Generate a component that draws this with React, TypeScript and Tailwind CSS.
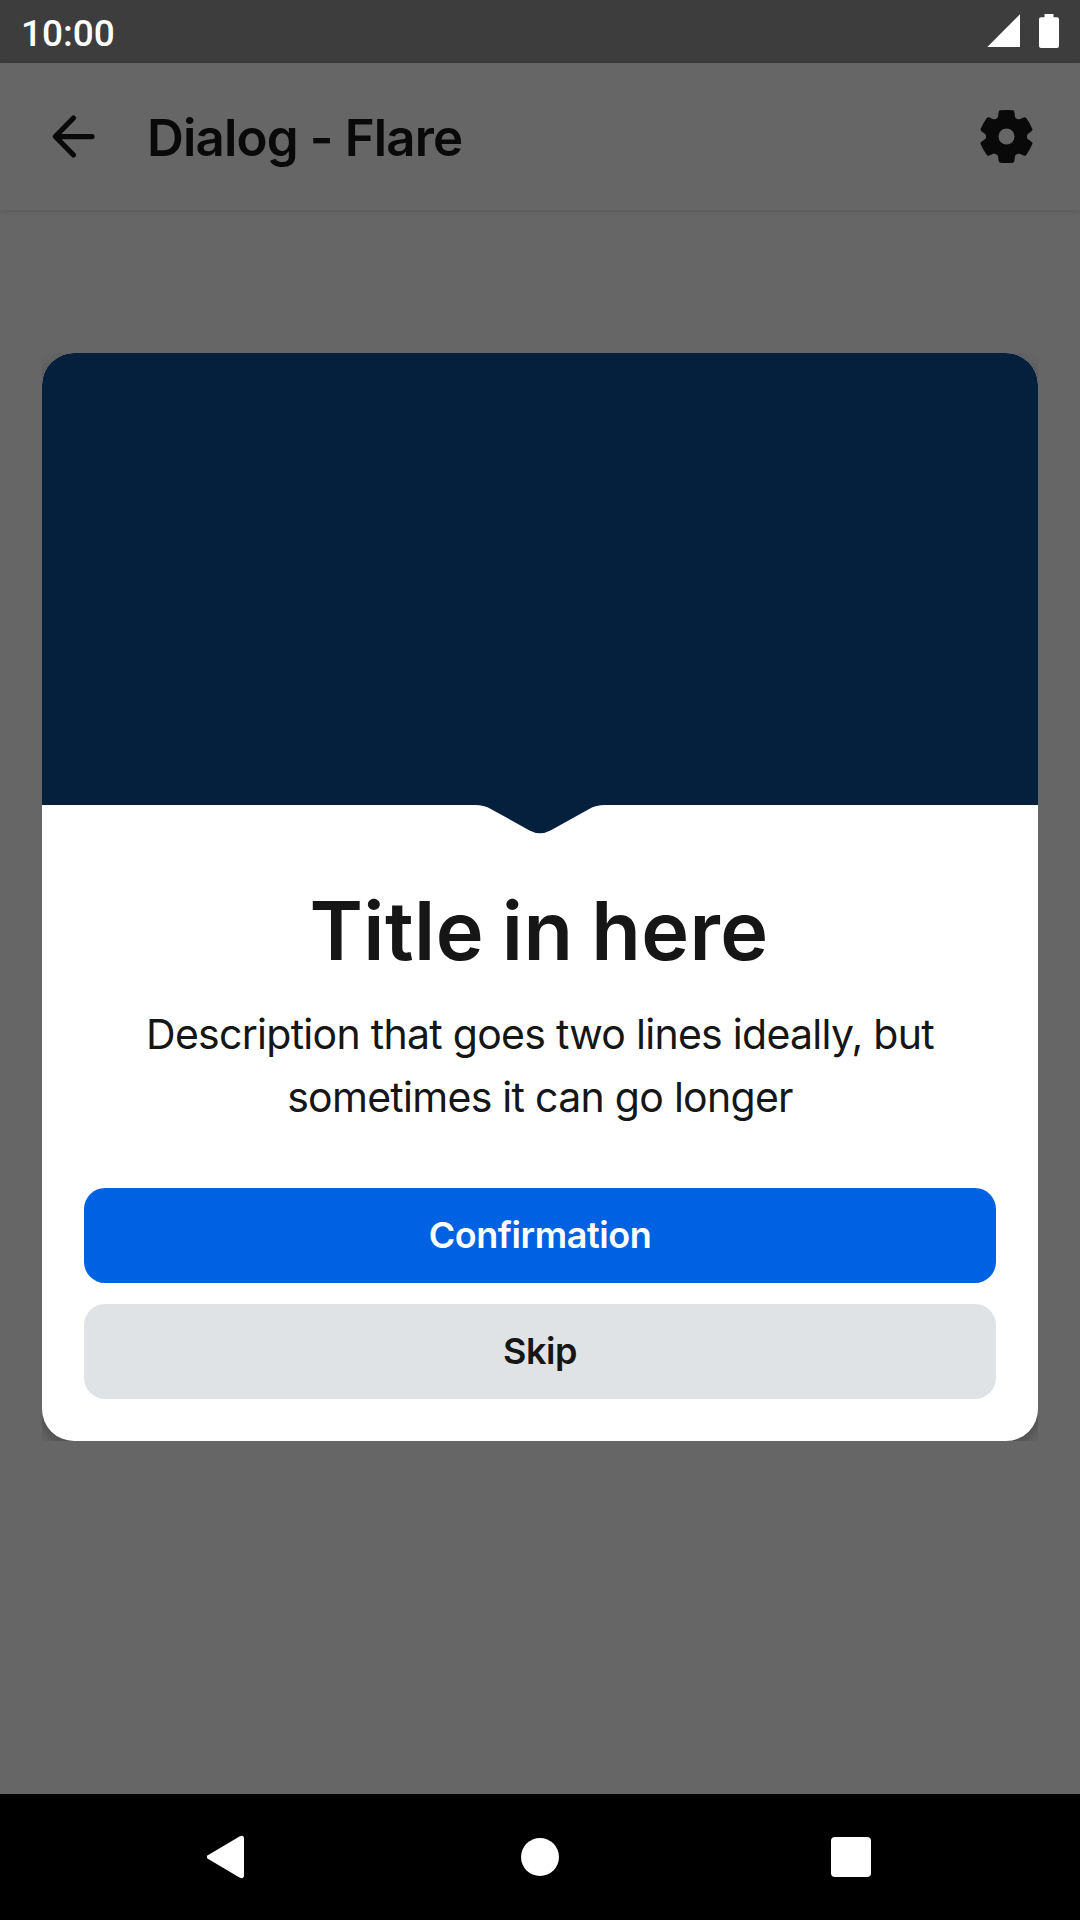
import React from "react";

function gearPath(cx: number, cy: number) {
  const rotate = (x: number, y: number, step: number) => {
    const a = (step * Math.PI) / 3;
    const px = cx + x * Math.cos(a) - y * Math.sin(a);
    const py = cy + x * Math.sin(a) + y * Math.cos(a);
    return `${px.toFixed(2)} ${py.toFixed(2)}`;
  };
  let d = `M${rotate(-10.25, -17.75, 0)}`;
  for (let i = 0; i < 6; i++) {
    const p = (x: number, y: number) => rotate(x, y, i);
    d += `C${p(-8.9, -18.5)} ${p(-8.6, -19.2)} ${p(-8.4, -20.2)}`;
    d += `L${p(-7.9, -24.3)}Q${p(-7.7, -26)} ${p(-6.4, -26.2)}`;
    d += `Q${p(0, -27)} ${p(6.4, -26.2)}Q${p(7.7, -26)} ${p(7.9, -24.3)}`;
    d += `L${p(8.4, -20.2)}C${p(8.6, -19.2)} ${p(8.9, -18.5)} ${p(10.25, -17.75)}`;
  }
  return `${d}ZM${cx - 8} ${cy}a8 8 0 1 0 16 0a8 8 0 1 0 -16 0Z`;
}

function StatusBar() {
  return (
    <div className="flex h-[63px] items-center justify-between bg-[#3d3d3d] pl-[21px] pr-[21px] text-white">
      <span className="pt-[5px] font-['Roboto',sans-serif] text-[37px] leading-[58px] font-medium">10:00</span>
      <svg className="h-[63px] w-[73px]" viewBox="0 0 73 63" fill="currentColor">
        <path d="M1.300 47L34 14.200V47Z" />
        <path d="M18.500 14h9v3.200h3.500a2 2 0 0 1 2 2v26.800a2 2 0 0 1 -2 2h-16a2 2 0 0 1 -2 -2v-26.800a2 2 0 0 1 2 -2h3.500Z" transform="translate(40 0)" />
      </svg>
    </div>
  );
}

function AppBar() {
  return (
    <header className="flex h-[147px] items-center bg-[#666666] pr-[42px] pl-[42px] text-[#090909] shadow-[0_1px_5px_rgba(0,0,0,0.14)]">
      <svg className="size-[63px]" viewBox="0 0 63 63" fill="none" stroke="currentColor" strokeWidth="5.25" strokeLinecap="round" strokeLinejoin="round">
        <path d="M50 31.500H14M31.500 13L13.300 31.500L31.500 50" />
      </svg>
      <h1 className="ml-[42px] flex-1 pt-0.5 text-[51px] leading-[63px] font-semibold tracking-[-0.84px]">Dialog - Flare</h1>
      <svg className="size-[63px]" viewBox="0 0 63 63" fill="currentColor">
        <path fillRule="evenodd" d={gearPath(31.5, 31.5)} />
      </svg>
    </header>
  );
}

function FlareDialog() {
  return (
    <div className="mx-[42px] mt-[143px] overflow-hidden">
      <section className="overflow-hidden rounded-[32px] bg-white shadow-[0_5px_14px_rgba(0,0,0,0.3)]">
        <div className="h-[452px] bg-[#05203c]" />
        <svg className="mx-auto block h-[29px] w-[130px]" viewBox="0 0 130 29" fill="#05203c">
          <path d="M0 0C6 0 11 1 16.700 4.400L54.500 25.500Q65 31 75.500 25.500L113.300 4.400C119 1 124 0 130 0Z" />
        </svg>
        <div className="px-[42px] pt-[42px] pb-[42px] text-center text-[#161616]">
          <h2 className="pr-0.5 text-[81px] leading-[110px] font-semibold tracking-[0.4px] [word-spacing:-3px]">Title in here</h2>
          <p className="mx-auto mt-[17px] w-[820px] text-[41px] leading-[63px] tracking-[-0.72px]">
            Description that goes two lines ideally, but sometimes it can go longer
          </p>
          <div className="mt-[59px] flex flex-col gap-[21px] text-[36px] font-semibold tracking-[-0.45px]">
            <button className="h-[95px] rounded-[21px] bg-[#0062e3] pb-0.5 text-white">Confirmation</button>
            <button className="h-[95px] rounded-[21px] bg-[#dfe3e6] pb-0.5">Skip</button>
          </div>
        </div>
      </section>
    </div>
  );
}

function NavigationBar() {
  return (
    <nav className="grid h-[126px] grid-cols-[450px_180px_450px] items-center bg-black">
      <svg className="ml-[206px] h-[44px] w-[39px]" viewBox="0 0 39 44" fill="white">
        <path d="M1.800 20.200L33.500 1.400Q38 -0.500 38 4V40Q38 44.500 33.500 42.600L1.800 23.800Q-0.200 22 1.800 20.200Z" />
      </svg>
      <div className="mx-auto size-[37.500px] rounded-full bg-white" />
      <div className="ml-[201px] size-[40px] rounded-[4px] bg-white" />
    </nav>
  );
}

export default function App() {
  return (
    <div className="flex h-[1920px] w-[1080px] flex-col bg-[#666666] font-['Inter',sans-serif]">
      <StatusBar />
      <AppBar />
      <main className="flex-1">
        <FlareDialog />
      </main>
      <NavigationBar />
    </div>
  );
}
